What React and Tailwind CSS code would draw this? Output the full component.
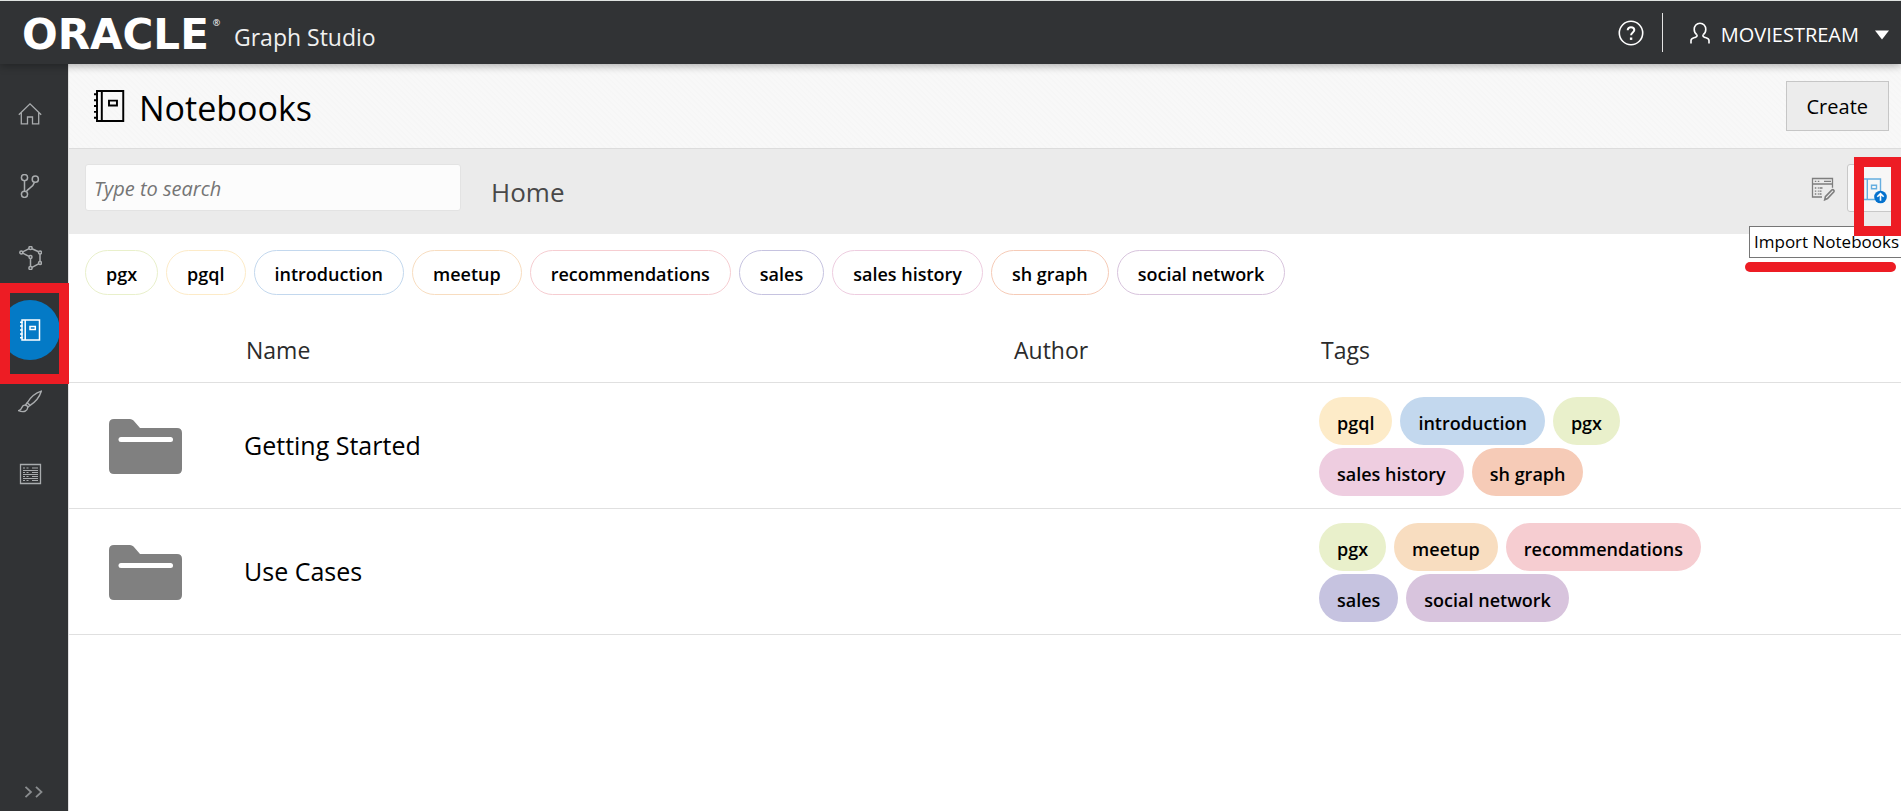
import React from "react";

const CHIP = {
  pgx: { border: "border-[#e9f0cb]", fill: "bg-[#e9f0cb]" },
  pgql: { border: "border-[#fdebc8]", fill: "bg-[#fdebc8]" },
  introduction: { border: "border-[#c3d8ee]", fill: "bg-[#c3d8ee]" },
  meetup: { border: "border-[#f8ddc0]", fill: "bg-[#f8ddc0]" },
  recommendations: { border: "border-[#f6cdd1]", fill: "bg-[#f6cdd1]" },
  sales: { border: "border-[#c6c3e0]", fill: "bg-[#c6c3e0]" },
  "sales history": { border: "border-[#eecde0]", fill: "bg-[#eecde0]" },
  "sh graph": { border: "border-[#f6cbb7]", fill: "bg-[#f6cbb7]" },
  "social network": { border: "border-[#d8c4dd]", fill: "bg-[#d8c4dd]" },
};

const ROWS = [
  { name: "Getting Started", tags: ["pgql", "introduction", "pgx", "sales history", "sh graph"] },
  { name: "Use Cases", tags: ["pgx", "meetup", "recommendations", "sales", "social network"] },
];

function Svg({ className, box = "0 0 24 24", children, width = 1.3 }) {
  return (
    <svg viewBox={box} className={className} fill="none" stroke="currentColor" strokeWidth={width} aria-hidden="true">
      {children}
    </svg>
  );
}

const HomeIcon = () => (
  <Svg className="size-6">
    <path d="M.8 12.700 12 1.800l11.200 10.900M3.300 10.500v11.300h6.200v-6.800h5v6.800h6.200V10.500" />
  </Svg>
);

const BranchIcon = () => (
  <Svg className="size-6" width={1.5}>
    <circle cx="6.500" cy="3.600" r="3.100" />
    <circle cx="17.300" cy="5.200" r="3.100" />
    <circle cx="6.500" cy="20.300" r="3.100" />
    <path d="M6.500 6.700v10.500M8.500 17.400c2-3.400 6.600-4 8-9.200" />
  </Svg>
);

const GraphIcon = () => (
  <Svg className="size-6" width={1.5}>
    <circle cx="3.300" cy="6.500" r="1.500" />
    <circle cx="12.500" cy="2" r="1.600" />
    <circle cx="22" cy="6.500" r="1.500" />
    <circle cx="12.500" cy="11" r="1.500" />
    <circle cx="22" cy="17" r="1.500" />
    <circle cx="12.500" cy="22" r="1.600" />
    <path d="m4.700 5.800 6.400-3.100M14 2.700l6.600 3.100M22 8v7.500M20.600 17.800l-6.600 3.500M12.500 20.400v-7.900M11.100 10.300 4.700 7.200" />
  </Svg>
);

function NotebookIcon({ className, width = 1.3 }) {
  return (
    <Svg className={className} width={width}>
      <path d="M4 2h17.500v20H4zM7.200 2v20M12 8.400h5.300v3.200H12z" />
      <path d="M2 4.200h2.600M2 8.100h2.600M2 12h2.600M2 15.900h2.600M2 19.800h2.600" />
    </Svg>
  );
}

const BrushIcon = () => (
  <Svg className="size-6" width={1.4}>
    <path d="M23.300 1.200C17.500 3 12 8.200 9.200 12.800l2.900 2.500C16.500 12.500 21.500 7 23.300 1.200Z" />
    <path d="M9.200 12.800 7.300 15.200M12.100 15.300l-2.400 2" />
    <path d="M7.300 15.200c1.700.2 2.600 1.100 2.400 2.600-.3 3-3.800 5.200-9.200 2.800 2.400-.4 2.800-1.300 3.400-3 .5-1.600 1.800-2.600 3.400-2.400Z" />
  </Svg>
);

const JobsIcon = () => (
  <Svg className="size-6" width={1.3}>
    <path d="M2.500 2.500h20v19h-20z" />
    <path strokeWidth="1" d="M5 8.500h15M5 12.500h15M5 16.500h15" />
    <path strokeWidth="1.200" d="M5 6h2M8.500 6h2M14 6h6M5 10.500h2M8.500 10.500h2M14 10.500h6M5 14.500h2M8.500 14.500h2M14 14.500h6M5 18.500h2M8.500 18.500h2M14 18.500h6" />
  </Svg>
);

const NAV = [
  { label: "Home", Icon: HomeIcon },
  { label: "Models", Icon: BranchIcon },
  { label: "Graphs", Icon: GraphIcon },
  { label: "Notebooks", Icon: () => <NotebookIcon className="size-6" width={1.5} />, active: true },
  { label: "Templates", Icon: BrushIcon },
  { label: "Jobs", Icon: JobsIcon },
];

function Header() {
  return (
    <header className="relative z-10 flex h-16 shrink-0 items-center border-t border-[#dfe3e1] bg-[#313335] pr-3 pl-[22px] text-white shadow-[0_2px_8px_rgba(0,0,0,0.3)]">
      <a href="#home" className="flex items-center" aria-label="Oracle Graph Studio">
        <span className="flex w-[212px] items-start">
          <span className="pt-1 font-['DejaVu_Sans',sans-serif] text-[42px] leading-10 font-bold">ORACLE</span>
          <span className="pt-2 pl-1 text-[9px] leading-2">®</span>
        </span>
        <span className="pt-2 text-[23px] leading-8 text-[#f0f0f0]">Graph Studio</span>
      </a>
      <div className="ml-auto flex items-center">
        <button type="button" aria-label="Help" className="mr-[18px]">
          <Svg className="size-[26px]" box="0 0 26 26" width={1.6}>
            <circle cx="13" cy="13" r="11.700" />
            <path strokeWidth="2" d="M9.700 10.300c0-2 1.400-3.100 3.300-3.100s3.300 1.100 3.300 2.900c0 2.400-3.200 2.400-3.200 5.100" />
            <path strokeWidth="2.400" d="M11.900 18.700h2.400" />
          </Svg>
        </button>
        <span className="h-[39px] w-px bg-[#e4e4e4]" />
        <button type="button" className="flex items-center pl-[26px]">
          <Svg className="size-[22px]" box="0 0 22 22" width={1.6}>
            <path d="M7.800 12.600C6 11.500 5.200 9.600 5.200 7.300 5.200 3.900 7.600 1.200 11 1.200s5.800 2.700 5.800 6.100c0 2.300-.8 4.200-2.600 5.300" />
            <path d="M2 21.500v-3c0-2.300 2.500-2.600 4.600-3.300 1.700-.6 1.700-1.500 1.200-2.600M20 21.500v-3c0-2.300-2.500-2.600-4.600-3.300-1.700-.6-1.700-1.500-1.200-2.600" />
          </Svg>
          <span className="pt-1 pl-[10px] text-xl leading-7">MOVIESTREAM</span>
          <svg viewBox="0 0 14 10" className="mt-1 ml-4 h-[10px] w-[14px]" fill="currentColor" aria-hidden="true">
            <path d="M0 .5h14L7 9.500z" />
          </svg>
        </button>
      </div>
    </header>
  );
}

function Sidebar() {
  return (
    <nav className="flex w-[68px] shrink-0 flex-col bg-[#313335] pt-[14px] text-[#a9acae]">
      {NAV.map(({ label, Icon, active }) => (
        <a key={label} href={`#${label.toLowerCase()}`} aria-label={label} className="relative flex h-[72px] items-center">
          <span
            className={
              active
                ? "flex size-[60px] items-center justify-center rounded-full bg-[#047ac6] text-white"
                : "flex size-[60px] items-center justify-center"
            }
          >
            <Icon />
          </span>
          {active && <span className="absolute -top-[11px] left-0 z-20 h-[101px] w-[69px] border-[10px] border-[#ed1c24]" />}
        </a>
      ))}
      <button type="button" aria-label="Expand menu" className="mt-auto flex h-[38px] justify-center pt-[13px] text-[#8a8d8f]">
        <Svg className="h-3 w-5" box="0 0 20 12" width={1.8}>
          <path d="m1.500.8 5.500 5.200-5.500 5.200M12 .8l5.500 5.200-5.500 5.200" />
        </Svg>
      </button>
    </nav>
  );
}

function Toolbar() {
  return (
    <div className="relative flex h-[85px] items-center bg-[#ebebeb] pr-2 pl-4">
      <input
        type="text"
        aria-label="Search notebooks"
        placeholder="Type to search"
        className="mb-2 h-[47px] w-[376px] rounded-[3px] border border-[#e3e3e3] bg-[#fcfcfc] px-2 pt-[2px] text-xl text-[#333] italic outline-none placeholder:text-[#757575]"
      />
      <a href="#home" className="ml-[30px] text-[26px] leading-8 text-[#484848]">
        Home
      </a>
      <div className="mb-2 ml-auto flex items-center">
        <button type="button" aria-label="Edit notebook" className="mr-3 pt-[2px] text-[#7e7e7e]">
          <Svg className="size-6">
            <path d="M11 20H1.500V1.500h20v9.200M1.500 7h20M13 4.300h7" />
            <path d="M8.500 11h3M8.500 14.200h2M8.500 17h2" />
            <path strokeDasharray="1.500 1.500" d="M3.800 4.300h5M3.800 11h4M3.800 14.200h4M3.800 17h4" />
            <path strokeWidth="1.600" d="m13.700 22.800.7-3.200 6.300-6.500c1.500-1.100 3 .5 2 1.900l-6.200 6.600-2.800 1.200Z" />
          </Svg>
        </button>
        <button type="button" aria-label="Import Notebooks" className="flex h-12 w-[46px] items-center rounded-[3px] border border-[#c8c8c8] bg-[#f7f7f7] pt-1 pl-[11px]">
          <svg viewBox="0 0 28 28" className="size-7 shrink-0" fill="none" aria-hidden="true">
            <g stroke="#66aee0" strokeWidth="1.400">
              <path d="M4.500 3h17v20.500h-17zM8.300 3v20.500M12.500 9.300h5v3.500h-5z" />
              <path d="M2 6h2.600M2 10h2.600M2 14h2.600M2 18h2.600M2 21.500h2.600" />
            </g>
            <circle cx="21.500" cy="21" r="6.300" fill="#0572ce" />
            <path d="M21.500 24.800v-7M18.300 20.800l3.200-3.200 3.200 3.200" stroke="#fff" strokeWidth="1.600" />
          </svg>
        </button>
      </div>
      <div role="tooltip" className="absolute top-[77px] right-0 z-20 w-[152px] border border-r-0 border-[#767676] bg-white pl-1 text-[17px] leading-[30px] whitespace-nowrap text-black">
        Import Notebooks
      </div>
      <span className="absolute top-[8px] right-0 z-30 h-[79px] w-[47px] border-[10px] border-[#ed1c24]" />
      <span className="absolute top-[113px] right-[5px] z-30 h-[10px] w-[151px] rounded-full bg-[#ed1c24]" />
    </div>
  );
}

export default function App() {
  return (
    <div className="flex min-h-screen flex-col overflow-x-hidden bg-white font-['Open_Sans','Noto_Sans',sans-serif] text-black">
      <Header />
      <div className="flex grow">
        <Sidebar />
        <main className="min-w-0 grow border-l border-[#e0e0e0]">
          <div className="flex h-[85px] items-center border-b border-[#dcdcdc] bg-[repeating-linear-gradient(45deg,#f8f8f8_0px,#f8f8f8_2px,#f6f6f6_3px,#f6f6f6_4px)] pr-3 pl-[22px]">
            <NotebookIcon className="size-9" width={1.3} />
            <h1 className="pt-1 pl-3 text-[34px] leading-10">Notebooks</h1>
            <button type="button" className="ml-auto h-[50px] border border-[#c6c6c6] bg-[#ececec] px-5 pt-[2px] text-xl">
              Create
            </button>
          </div>
          <Toolbar />
          <div className="flex flex-wrap gap-2 px-4 pt-4">
            {Object.entries(CHIP).map(([tag, { border }]) => (
              <button key={tag} type="button" className={`h-[45px] rounded-full border px-5 pt-[3px] text-lg leading-6 font-semibold ${border}`}>
                {tag}
              </button>
            ))}
          </div>
          <table className="w-full table-fixed border-collapse text-left">
            <colgroup>
              <col className="w-[175px]" />
              <col />
              <col className="w-[307px]" />
              <col className="w-[582px]" />
            </colgroup>
            <thead>
              <tr className="h-[87px] border-b border-[#e0e0e0] text-[23px] text-[#2b2b2b]">
                <th aria-label="Type" />
                <th className="pt-6 pl-[2px] font-normal">Name</th>
                <th className="pt-6 pl-[2px] font-normal">Author</th>
                <th className="pt-6 pl-[2px] font-normal">Tags</th>
              </tr>
            </thead>
            <tbody>
              {ROWS.map(({ name, tags }) => (
                <tr key={name} className="h-[126px] border-b border-[#e0e0e0]">
                  <td className="pt-[2px] pl-10">
                    <svg viewBox="0 0 73 55" className="h-[55px] w-[73px]" aria-hidden="true">
                      <path
                        fill="#808080"
                        d="M5 0h16q2 0 3.500 1.500L31 9h37q5 0 5 5v36q0 5-5 5H5q-5 0-5-5V5q0-5 5-5Z"
                      />
                      <path d="M12 20.500h49.500" stroke="#fff" strokeWidth="5" strokeLinecap="round" />
                    </svg>
                  </td>
                  <td className="pt-[2px] text-[25px]">
                    <a href={`#${name.toLowerCase().replace(" ", "-")}`}>{name}</a>
                  </td>
                  <td />
                  <td className="pt-[2px]">
                    <div className="flex max-w-[440px] flex-wrap gap-x-2 gap-y-[3px]">
                      {tags.map((tag) => (
                        <span key={tag} className={`h-12 rounded-full px-[18px] pt-[14px] text-lg leading-6 font-semibold ${CHIP[tag].fill}`}>
                          {tag}
                        </span>
                      ))}
                    </div>
                  </td>
                </tr>
              ))}
            </tbody>
          </table>
        </main>
      </div>
    </div>
  );
}
